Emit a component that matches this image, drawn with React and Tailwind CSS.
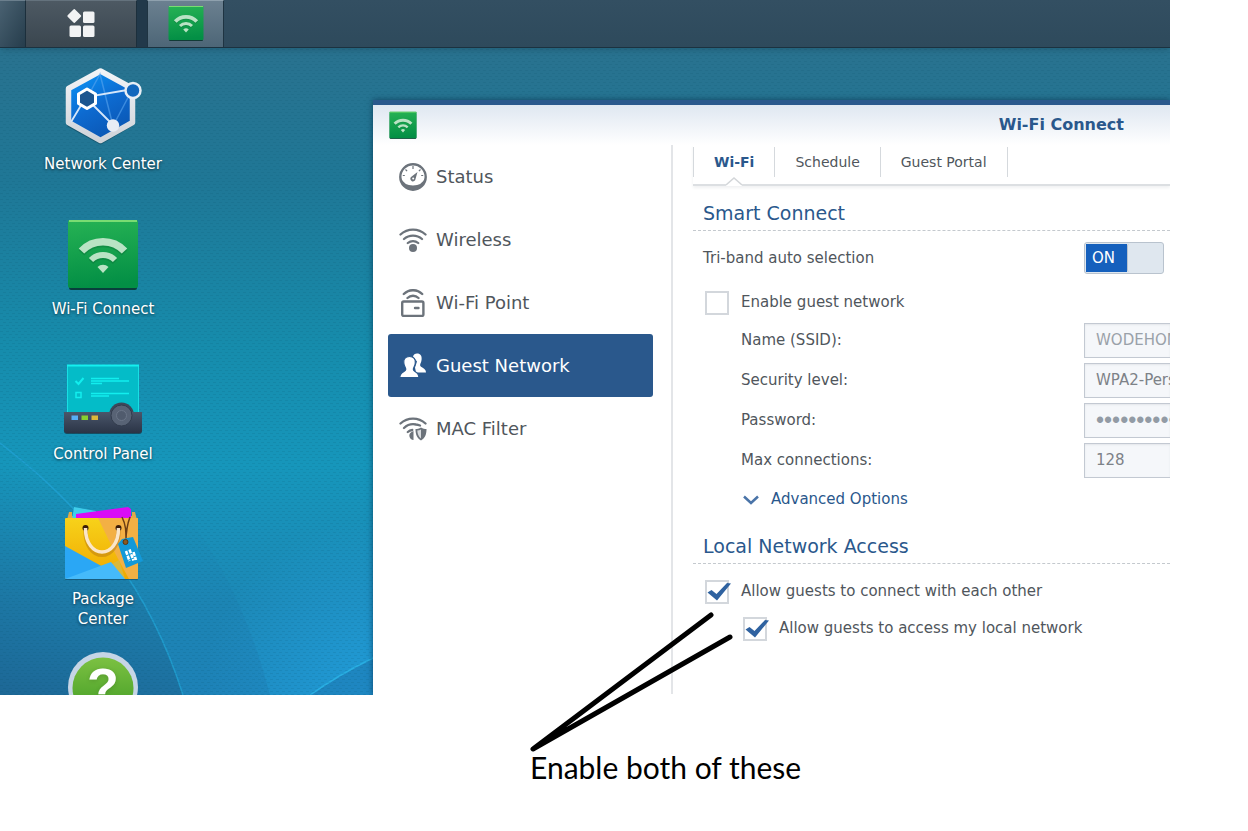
import { useState } from 'react';

const WifiFan = ({ className }) => (
  <svg viewBox="5 8 70 72" className={className} aria-hidden="true">
    <defs>
      <linearGradient id="wifiGreen" x1="0" y1="0" x2="0.1" y2="1">
        <stop offset="0" stopColor="#26b254" />
        <stop offset="1" stopColor="#038f45" />
      </linearGradient>
    </defs>
    <rect x="6" y="13" width="68" height="67" rx="2" fill="#06332a" opacity="0.85" />
    <rect x="5" y="10" width="70" height="68" rx="2" fill="url(#wifiGreen)" />
    <path d="M6 11h68" stroke="#79dc72" strokeWidth="2" />
    <g fill="none" stroke="#0a6a35" opacity="0.35">
      <path d="M18.500 43a29 29 0 0 1 43 0" strokeWidth="7.500" />
      <path d="M28 52a16.500 16.500 0 0 1 24 0" strokeWidth="6" />
    </g>
    <g fill="none" stroke="#b9e3c4">
      <path d="M18.500 41a29.500 29.500 0 0 1 43 0" strokeWidth="7.500" />
      <path d="M28 50a17 17 0 0 1 24 0" strokeWidth="6" />
    </g>
    <path d="M40 63l-5.500-6a8 8 0 0 1 11 0z" fill="#b9e3c4" />
  </svg>
);

const NetworkCenterIcon = () => (
  <svg viewBox="0 0 80 80" className="h-20 w-20" aria-hidden="true">
    <defs>
      <linearGradient id="hexBlue" x1="0.2" y1="0" x2="0.7" y2="1">
        <stop offset="0" stopColor="#0a93f5" />
        <stop offset="0.5" stopColor="#0d6ad0" />
        <stop offset="1" stopColor="#0a54b0" />
      </linearGradient>
      <linearGradient id="hexRim" x1="0" y1="0" x2="0" y2="1">
        <stop offset="0" stopColor="#f2f4f7" />
        <stop offset="1" stopColor="#cfd3d9" />
      </linearGradient>
    </defs>
    <path d="M37.500 8L69 25v34L37.500 77.500 6 60V24z" fill="#0b3c50" opacity="0.5" stroke="#0b3c50" strokeWidth="4" strokeLinejoin="round" />
    <path d="M37.500 6L69.500 23.500v34L37.500 75.500 5.500 57.500v-34z" fill="url(#hexBlue)" stroke="url(#hexRim)" strokeWidth="5.500" strokeLinejoin="round" />
    <path d="M24 33l13-24 13 52 19-36" fill="none" stroke="#5aa5ee" strokeWidth="1.500" opacity="0.6" />
    <path d="M8 57l15-25 47-8M24 34l27 27" fill="none" stroke="#d5e6fa" strokeWidth="1.800" />
    <path d="M24 24l8.500 5v9.500l-8.500 5-8.500-5V29z" fill="#1b558f" stroke="#fff" strokeWidth="3" strokeLinejoin="round" />
    <circle cx="70" cy="25.500" r="7.500" fill="#1267bd" stroke="#e8eef5" strokeWidth="2.500" />
    <circle cx="50" cy="60.500" r="6.200" fill="#e8edf5" />
  </svg>
);

const ControlPanelIcon = () => (
  <svg viewBox="0 0 80 80" className="h-20 w-20" aria-hidden="true">
    <defs>
      <linearGradient id="deck" x1="0" y1="0" x2="0" y2="1">
        <stop offset="0" stopColor="#4a566a" />
        <stop offset="1" stopColor="#2b3446" />
      </linearGradient>
    </defs>
    <rect x="4" y="10" width="72" height="48" rx="1" fill="#04bcc8" />
    <path d="M4.500 58V10.500h71V58" fill="none" stroke="#19dfe4" />
    <path d="M4 10.500h72" stroke="#14f0f0" strokeWidth="2" />
    <g stroke="#12eeee" fill="none" strokeWidth="1.500">
      <path d="M12.500 26l3 3 5-6" strokeWidth="2" />
      <rect x="13" y="37.500" width="5" height="5" />
      <path d="M28 23.500h28M28 26h38M28 28.500h11M28 38.500h38M28 41h18" />
    </g>
    <path d="M1 60h78v16a3 3 0 0 1-3 3H4a3 3 0 0 1-3-3z" fill="#17303f" opacity="0.7" />
    <circle cx="58.500" cy="60" r="12.500" fill="#3d485a" />
    <path d="M1 57h78v18a3 3 0 0 1-3 3H4a3 3 0 0 1-3-3z" fill="url(#deck)" />
    <rect x="8.500" y="60.500" width="6.500" height="4.500" fill="#57aef5" />
    <rect x="18.500" y="60.500" width="6.500" height="4.500" fill="#86cf30" />
    <rect x="28.500" y="60.500" width="6.500" height="4.500" fill="#dcb83a" />
    <circle cx="58.500" cy="60.500" r="10.500" fill="#586375" stroke="#323c4d" />
    <circle cx="58.500" cy="60.500" r="5" fill="#505b6d" stroke="#6b7688" />
  </svg>
);

const PackageCenterIcon = () => (
  <svg viewBox="0 0 80 80" className="h-20 w-20" aria-hidden="true">
    <defs>
      <linearGradient id="bagYellow" x1="0" y1="0" x2="0" y2="1">
        <stop offset="0" stopColor="#f7d21a" />
        <stop offset="1" stopColor="#f0a800" />
      </linearGradient>
      <clipPath id="bagClip">
        <rect x="2" y="18" width="73" height="61" rx="1" />
      </clipPath>
    </defs>
    <path d="M4 20l2-8h3v4h60v-4h3l2 8z" fill="#e0a94a" />
    <path d="M9 20l2-13 22 4v9z" fill="#3fcdea" />
    <path d="M13 18v-4l52-7 3 2v9z" fill="#d90bf5" />
    <rect x="2" y="20" width="73" height="60" rx="1" fill="#154f6b" opacity="0.7" />
    <g clipPath="url(#bagClip)">
      <rect x="2" y="18" width="73" height="61" fill="url(#bagYellow)" />
      <path d="M35 18h40v61H66L53 55z" fill="#f3b044" />
      <path d="M2 46l60 33H2z" fill="#2aa7f5" />
      <path d="M42 68l14-8 6 19z" fill="#d9b83a" />
      <path d="M2 79l46-17 14 17z" fill="#45bafa" />
    </g>
    <circle cx="22.500" cy="28" r="3" fill="#3a1c08" />
    <circle cx="55.500" cy="28" r="3" fill="#3a1c08" />
    <path d="M22.500 30c0 33 33 33 33 0" fill="none" stroke="#b97a12" strokeWidth="4.500" opacity="0.5" />
    <path d="M22.500 28c0 32 33 32 33 0" fill="none" stroke="#fbe6c8" strokeWidth="3.500" />
    <path d="M59 17c4 8 4 14 4 24M67 17c-3 8-4 14-4 24" fill="none" stroke="#6b3d14" strokeWidth="1.500" />
    <path d="M55 44l4-5 11-2 10 24-17 7z" fill="#1399d8" />
    <circle cx="62.500" cy="42" r="2.500" fill="#8a5a22" stroke="#5a3410" />
    <path d="M63 51l3.500 10M66.500 49.500l4 11M70.500 52l2.500 8" fill="none" stroke="#fff" strokeWidth="2.500" strokeDasharray="4 1" />
  </svg>
);

const HelpIcon = () => (
  <svg viewBox="0 0 80 80" className="h-20 w-20 shrink-0" aria-hidden="true">
    <defs>
      <linearGradient id="helpGreen" x1="0" y1="0" x2="0" y2="1">
        <stop offset="0" stopColor="#7cc142" />
        <stop offset="1" stopColor="#3f9a24" />
      </linearGradient>
    </defs>
    <circle cx="40" cy="42" r="35" fill="#c6d5e6" />
    <circle cx="40" cy="43" r="30.500" fill="url(#helpGreen)" />
    <text x="40" y="60" textAnchor="middle" fontSize="52" fontWeight="700" fontFamily="Liberation Sans, sans-serif" fill="#fff" className="drop-shadow-sm">?</text>
  </svg>
);

const StatusIcon = () => (
  <svg viewBox="0 0 28 28" className="h-7 w-7" fill="none" stroke="#6c737b" aria-hidden="true">
    <circle cx="14" cy="14" r="12.700" strokeWidth="2.400" />
    <path d="M2 15a12 12 0 0 0 24 0q-3 7.500-12 7.500T2 15z" fill="#6c737b" stroke="none" />
    <path d="M14 3v3M6.500 6.500l1.600 1.600M21.500 6.500l-1.600 1.600M3.800 12.500h2M24.200 12.500h-2" strokeWidth="1.200" />
    <path d="M18.500 9l-2 7a2.600 2.600 0 1 1-4.500-2z" fill="#6c737b" stroke="none" />
    <circle cx="14.200" cy="15.500" r="1" fill="#fff" stroke="none" />
  </svg>
);

const WirelessIcon = () => (
  <svg viewBox="0 0 28 28" className="h-7 w-7" fill="none" stroke="#6c737b" strokeLinecap="round" strokeWidth="2.300" aria-hidden="true">
    <path d="M1.500 8.500a18.500 18.500 0 0 1 25 0M5 13a13.500 13.500 0 0 1 18 0M8.800 17a8 8 0 0 1 10.400 0" />
    <circle cx="14" cy="22" r="4" fill="#6c737b" stroke="none" />
  </svg>
);

const WifiPointIcon = () => (
  <svg viewBox="0 0 28 28" className="h-7 w-7" fill="none" stroke="#6c737b" strokeLinecap="round" strokeWidth="2.400" aria-hidden="true">
    <path d="M4.800 5a13 13 0 0 1 18.400 0M8.500 9a8 8 0 0 1 11 0" />
    <rect x="3.200" y="12.500" width="21.200" height="14.500" rx="1.500" />
    <path d="M16 19h3.500" />
  </svg>
);

const GuestIcon = () => (
  <svg viewBox="0 0 28 28" className="h-7 w-7" aria-hidden="true">
    <path d="M18 1.500c3.600 0 5 2.600 4.600 6-.2 2.500-1.300 4-1.500 5.500 0 3 5.900 2.500 5.900 7.500H17l-1-5 2-6-4-5c.5-2 2-3 4-3z" fill="#fff" />
    <path d="M10.500 4.500c4.500 0 6.200 3 5.800 6.500-.2 3-1.900 4.500-2 6.200 0 3 5.600 2 5.600 8.300H.8c0-6.300 6-5.300 6-8.300-.1-1.700-1.800-3.200-2-6.200-.5-3.500 1.200-6.500 5.700-6.500z" fill="#fff" stroke="#2a588c" strokeWidth="1.200" />
  </svg>
);

const MacFilterIcon = () => (
  <svg viewBox="0 0 28 28" className="h-7 w-7" fill="none" stroke="#6c737b" strokeLinecap="round" strokeWidth="2.300" aria-hidden="true">
    <path d="M1.500 8.500a18.500 18.500 0 0 1 25 0M5 13a13.500 13.500 0 0 1 12-3.500c2 .2 3 .6 4 1M8.800 17a8 8 0 0 1 4.500-2" />
    <path d="M14.500 16v9a4.300 4.300 0 0 1-2-8z" fill="#6c737b" stroke="none" />
    <path d="M22 12.500c2 1.200 3.700 1.500 5.500 1.500 0 5.500-1.500 9-5.500 11.500-4-2.500-5.500-6-5.500-11.500 1.800 0 3.500-.3 5.500-1.500z" fill="#6c737b" stroke="none" />
    <path d="M22 14.500v9c-2.500-2-3.500-4.500-3.700-8 1.400 0 2.500-.4 3.700-1z" fill="#d8dbde" stroke="none" />
  </svg>
);

const desktopApps = [
  { name: 'Network Center', icon: <NetworkCenterIcon /> },
  { name: 'Wi-Fi Connect', icon: <WifiFan className="mt-2 h-[72px] w-[70px]" /> },
  { name: 'Control Panel', icon: <ControlPanelIcon /> },
  { name: 'Package\nCenter', icon: <PackageCenterIcon /> }
];

const navigation = [
  { name: 'Status', icon: StatusIcon },
  { name: 'Wireless', icon: WirelessIcon },
  { name: 'Wi-Fi Point', icon: WifiPointIcon },
  { name: 'Guest Network', icon: GuestIcon },
  { name: 'MAC Filter', icon: MacFilterIcon }
];

const tabs = ['Wi-Fi', 'Schedule', 'Guest Portal'];

const Taskbar = () => (
  <header className="relative flex h-12 border-b border-[#1b3240] bg-linear-to-b from-[#334f62] to-[#2e4a5c] shadow-md">
    <div className="w-[25px] border-t border-[#6b7f8d] bg-linear-to-br from-[#4a6272] to-[#263d4c]" />
    <button
      type="button"
      aria-label="Main menu"
      className="flex w-28 justify-center border-x border-t border-[#1c2f3c] border-t-[#64727d] bg-linear-to-b from-[#4d5963] to-[#3a464f] pt-2"
    >
      <svg viewBox="0 0 28 28" className="h-7 w-7" fill="#f2f3f4" aria-hidden="true">
        <rect x="2" y="1.700" width="10.500" height="10.500" rx="1.500" transform="rotate(45 7.200 7)" />
        <rect x="16" y="2.500" width="11.500" height="11.500" rx="1.500" />
        <rect x="2.500" y="16.500" width="11.500" height="11.500" rx="1.500" />
        <rect x="16" y="16.500" width="11.500" height="11.500" rx="1.500" />
      </svg>
    </button>
    <div className="w-[10px] bg-[#22394a]" />
    <button
      type="button"
      aria-label="Wi-Fi Connect"
      className="flex w-[77px] items-start justify-center border border-b-0 border-[#1f3442] border-t-[#8fa1ae] bg-linear-to-b from-[#6b8090] to-[#4d6677] pt-1"
    >
      <WifiFan className="h-9 w-9" />
    </button>
  </header>
);

const Wallpaper = () => (
  <svg className="absolute inset-0 h-full w-full" aria-hidden="true">
    <defs>
      <pattern id="weave" width="6" height="6" patternUnits="userSpaceOnUse">
        <path d="M0 1.500h3M3 4.500h3" stroke="#0a4a66" strokeOpacity="0.13" />
      </pattern>
      <linearGradient id="sweep" x1="0.2" y1="0" x2="0" y2="1">
        <stop offset="0.1" stopColor="#1d6a96" stopOpacity="0" />
        <stop offset="1" stopColor="#1d5c88" stopOpacity="0.75" />
      </linearGradient>
      <linearGradient id="sweepSoft" x1="0" y1="0" x2="0" y2="1">
        <stop offset="0.2" stopColor="#1c6da3" stopOpacity="0" />
        <stop offset="1" stopColor="#1c6da3" stopOpacity="0.25" />
      </linearGradient>
      <radialGradient id="glow" gradientUnits="userSpaceOnUse" cx="373" cy="690" r="170">
        <stop offset="0" stopColor="#22a3e2" stopOpacity="0.7" />
        <stop offset="1" stopColor="#22a3e2" stopOpacity="0" />
      </radialGradient>
    </defs>
    <rect x="180" y="500" width="400" height="195" fill="url(#glow)" />
    <path d="M120 440C205 520 245 600 270 695H183C150 590 90 512 0 443z" fill="url(#sweepSoft)" />
    <path d="M0 443C90 512 150 590 183 695H0z" fill="url(#sweep)" />
    <path d="M0 443C90 512 150 590 183 695" fill="none" stroke="#20a0d2" strokeWidth="1.500" opacity="0.8" />
    <path d="M310 695Q340 674 373 658V695z" fill="#1b74ae" opacity="0.5" />
    <path d="M310 695Q340 674 373 658" fill="none" stroke="#29aee2" strokeWidth="1.500" />
    <rect width="100%" height="100%" fill="url(#weave)" />
  </svg>
);

const Check = ({ id, label, checked, onChange }) => (
  <div className="flex items-center gap-3">
    <span className="relative flex">
      <input
        id={id}
        type="checkbox"
        checked={checked}
        onChange={onChange}
        className="h-6 w-6 appearance-none border-2 border-[#d3d7dc] bg-white"
      />
      {checked && (
        <svg viewBox="0 0 26 24" className="pointer-events-none absolute left-0 top-0 h-6 w-[26px]" aria-hidden="true">
          <path d="M2.500 12.500l4-2.500 5 4L22 3l4 .5L12 20.500z" fill="#2f62a0" />
        </svg>
      )}
    </span>
    <label htmlFor={id}>{label}</label>
  </div>
);

const fieldClass =
  'h-[35px] w-[86px] appearance-none rounded-none border border-r-0 border-[#c3c9d2] bg-[#f5f7fa] pl-[11px] shadow-[inset_0_1px_2px_#e3e6ea] opacity-100';

const Field = ({ id, label, children }) => (
  <div className="flex h-10 items-center justify-between pl-12">
    <label htmlFor={id}>{label}</label>
    {children}
  </div>
);

const SectionTitle = ({ children }) => (
  <h2 className="mt-[14px] border-b border-dashed border-[#c4c9ce] pb-1 pl-[10px] text-[19px] leading-[26px] text-[#2a588c]">
    {children}
  </h2>
);

const GuestNetwork = () => {
  const [autoBand, setAutoBand] = useState(true);
  const [guest, setGuest] = useState(false);
  const [eachOther, setEachOther] = useState(true);
  const [localAccess, setLocalAccess] = useState(true);

  return (
    <main className="min-w-0 flex-1 pl-5 pb-[47px] text-[15px] text-[#50565c]">
      <nav className="flex border-b-2 border-[#dcdfe2] pt-[2px] pb-[7px] text-sm shadow-[0_2px_3px_#f0f1f2]">
        {tabs.map((tab, i) => (
          <a
            key={tab}
            href="#"
            className={`relative flex h-[30px] items-center border-r border-[#d5d9dd] px-5 ${
              i === 0 ? 'border-l font-bold text-[#2a588c]' : ''
            }`}
          >
            {tab}
            {i === 0 && (
              <svg viewBox="0 0 16 9" className="absolute left-8 top-[30px] h-[9px] w-4" aria-hidden="true">
                <path d="M0 9V8L8 1l8 7v1z" fill="#fff" />
                <path d="M0 8L8 1l8 7" fill="none" stroke="#d3d6d9" strokeWidth="1.500" />
              </svg>
            )}
          </a>
        ))}
      </nav>

      <SectionTitle>Smart Connect</SectionTitle>
      <div className="flex h-[54px] items-center justify-between pl-[10px] pr-[6px]">
        <span id="auto-band">Tri-band auto selection</span>
        <button
          type="button"
          role="switch"
          aria-checked={autoBand}
          aria-labelledby="auto-band"
          onClick={() => setAutoBand(!autoBand)}
          className="flex h-8 w-20 items-stretch rounded-[3px] border border-[#b9c3ce] bg-[#dfe7ef] p-px"
        >
          <span className="flex w-[41px] items-center bg-[#1560bd] pl-[6px] text-white">{autoBand ? 'ON' : 'OFF'}</span>
          <span className="flex-1 rounded-[2px] border-l border-[#b9c3ce]" />
        </button>
      </div>
      <div className="flex h-[35px] items-center pl-3">
        <Check id="guest" label="Enable guest network" checked={guest} onChange={() => setGuest(!guest)} />
      </div>
      <Field id="ssid" label="Name (SSID):">
        <input id="ssid" type="text" defaultValue="WODEHOM" disabled={!guest} className={`${fieldClass} text-[#9aa1a9]`} />
      </Field>
      <Field id="security" label="Security level:">
        <select id="security" disabled={!guest} className={`${fieldClass} text-[#7d8288]`}>
          <option>WPA2-Personal</option>
        </select>
      </Field>
      <Field id="password" label="Password:">
        <input
          id="password"
          type="password"
          defaultValue="0000000000"
          disabled={!guest}
          className={`${fieldClass} font-['Liberation_Sans',sans-serif] text-[23px] text-[#929ba5]`}
        />
      </Field>
      <Field id="max" label="Max connections:">
        <select id="max" disabled={!guest} className={`${fieldClass} text-[#7d8288]`}>
          <option>128</option>
        </select>
      </Field>
      <button type="button" className="flex h-[39px] items-center gap-3 pl-[50px] text-[#2a588c]">
        <svg viewBox="0 0 16 10" className="h-[10px] w-4" fill="none" stroke="#4a74a8" strokeWidth="2.500" aria-hidden="true">
          <path d="M1 1.500l7 6.500 7-6.500" />
        </svg>
        Advanced Options
      </button>

      <SectionTitle>Local Network Access</SectionTitle>
      <div className="mt-[9px] flex h-[37px] items-center pl-3">
        <Check id="each-other" label="Allow guests to connect with each other" checked={eachOther} onChange={() => setEachOther(!eachOther)} />
      </div>
      <div className="flex h-[37px] items-center pl-[50px]">
        <Check id="local" label="Allow guests to access my local network" checked={localAccess} onChange={() => setLocalAccess(!localAccess)} />
      </div>
    </main>
  );
};

const App = () => {
  return (
    <div className="relative min-h-screen bg-white font-['DejaVu_Sans',sans-serif]">
      <div className="relative mr-[78px] overflow-hidden bg-[linear-gradient(#29728f_7%,#1f7796_26%,#168cac_50%,#1696bb_67%,#1c88b6_87%,#1d88bd_100%)]">
        <Wallpaper />
        <Taskbar />
        <div className="relative flex">
          <nav className="w-[373px] shrink-0 pt-[17px]">
            {desktopApps.map((app) => (
              <a key={app.name} href="#" className="flex h-[145px] w-[206px] flex-col items-center gap-[9px]">
                <span className="flex h-20 justify-center">{app.icon}</span>
                <span className="whitespace-pre-line text-center text-[15px] leading-5 text-white [text-shadow:0_1px_3px_#00000099]">
                  {app.name}
                </span>
              </a>
            ))}
            <a href="#" aria-label="Help" className="flex h-[50px] w-[206px] justify-center overflow-hidden">
              <HelpIcon />
            </a>
          </nav>

          <section className="mt-[52px] min-w-0 flex-1 border-t-[5px] border-[#2a588c] bg-white shadow-[0_0_6px_#00203c99]">
            <div className="flex h-10 items-center justify-between bg-linear-to-b from-[#dfe7f1] to-white pl-4 pr-[46px]">
              <WifiFan className="h-7 w-7" />
              <h1 className="text-base font-bold text-[#2a588c]">Wi-Fi Connect</h1>
            </div>
            <div className="flex">
              <aside className="flex w-[300px] shrink-0 flex-col border-r-2 border-[#e3e5e8] pl-[15px] pr-[18px]">
                {navigation.map((item) => {
                  const isActive = item.name === 'Guest Network';

                  return (
                    <a
                      key={item.name}
                      href="#"
                      className={`flex h-[63px] items-center gap-[9px] rounded-[3px] pl-[11px] text-lg ${
                        isActive ? 'bg-[#2a588c] text-white' : 'text-[#50565c]'
                      }`}
                    >
                      <item.icon />
                      {item.name}
                    </a>
                  );
                })}
              </aside>
              <GuestNetwork />
            </div>
          </section>
        </div>
      </div>

      <p className="pl-[530px] pt-[51px] font-['Lato',sans-serif] text-[30px] leading-[42px] text-black">Enable both of these</p>
      <svg viewBox="0 0 204 140" className="pointer-events-none absolute left-[529px] top-[612px] h-[140px] w-[204px]" aria-hidden="true">
        <path d="M182 3L4 137l197-112" fill="none" stroke="#000" strokeWidth="5" strokeLinecap="round" strokeLinejoin="round" />
      </svg>
    </div>
  );
};

export default App;
